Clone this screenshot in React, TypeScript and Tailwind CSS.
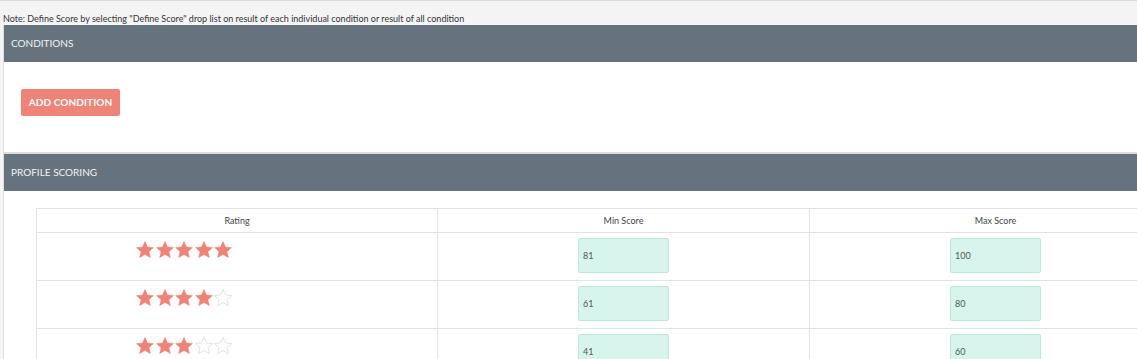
import React from 'react';

const STAR = 'M12 1.5l3.1 6.9 7.4.7-5.6 5 1.7 7.4L12 17.6l-6.6 3.9 1.7-7.4-5.6-5 7.4-.7z';

function Star({ filled }: { filled: boolean }) {
  return (
    <svg width="18" height="17" viewBox="1.2 1.2 21.6 20.6" className="shrink-0">
      <path
        d={STAR}
        fill={filled ? '#f08377' : 'none'}
        stroke={filled ? '#f08377' : '#d8d8d8'}
        strokeWidth={filled ? 0.4 : 0.9}
        strokeLinejoin="round"
      />
    </svg>
  );
}

const rows = [
  { stars: 5, min: '81', max: '100' },
  { stars: 4, min: '61', max: '80' },
  { stars: 3, min: '41', max: '60' },
];

function ScoreBox({ value }: { value: string }) {
  return (
    <div className="w-[91px] h-[35px] flex items-center pl-[4px] bg-[#d7f5ec] border border-[#bfe8dc] rounded-[2px] text-[9px] text-[#555]">
      {value}
    </div>
  );
}

export default function App() {
  return (
    <div className="w-[1137px] h-[359px] overflow-hidden bg-[#f4f4f5] border-t border-[#dcdcdc] font-['Lato',sans-serif]">
      <p className="h-[24px] pt-[13px] pl-[3px] text-[9px] leading-[10px] text-[#333] whitespace-nowrap">
        Note: Define Score by selecting "Define Score" drop list on result of each individual condition or result of all condition
      </p>

      <div className="ml-[3px] w-[1200px] border-l border-[#dedede] bg-white">
        {/* Conditions */}
        <div className="h-[37px] flex items-center pl-[7px] bg-[#66727e] text-[10px] text-[#f2f2f2]">
          CONDITIONS
        </div>
        <div className="h-[90px] pt-[26px] pl-[17px]">
          <button className="w-[99px] h-[27px] rounded-[2px] bg-[#f08377] text-white text-[10px] font-bold tracking-[0.1px]">
            ADD CONDITION
          </button>
        </div>

        {/* Profile scoring */}
        <div className="border-t-2 border-[#dcdcdc] h-[39px] flex items-center pl-[7px] bg-[#66727e] text-[10px] text-[#f2f2f2]">
          PROFILE SCORING
        </div>
        <div className="pt-[17px] pl-[32px]">
          <div className="grid grid-cols-[401px_372px_372px] border-t border-l border-[#e3e3e3] text-[9px] text-[#444]">
            {['Rating', 'Min Score', 'Max Score'].map((h) => (
              <div key={h} className="h-[24px] flex items-center justify-center border-r border-b border-[#e3e3e3]">
                {h}
              </div>
            ))}
            {rows.map((r) => (
              <React.Fragment key={r.min}>
                <div className="h-[48px] flex justify-center pt-[8px] border-r border-b border-[#e3e3e3]">
                  <div className="w-[202px] flex gap-[1.5px]">
                    {[0, 1, 2, 3, 4].map((i) => (
                      <Star key={i} filled={i < r.stars} />
                    ))}
                  </div>
                </div>
                <div className="h-[48px] flex justify-center pt-[5px] border-r border-b border-[#e3e3e3]">
                  <ScoreBox value={r.min} />
                </div>
                <div className="h-[48px] flex justify-center pt-[5px] border-r border-b border-[#e3e3e3]">
                  <ScoreBox value={r.max} />
                </div>
              </React.Fragment>
            ))}
          </div>
        </div>
      </div>
    </div>
  );
}
